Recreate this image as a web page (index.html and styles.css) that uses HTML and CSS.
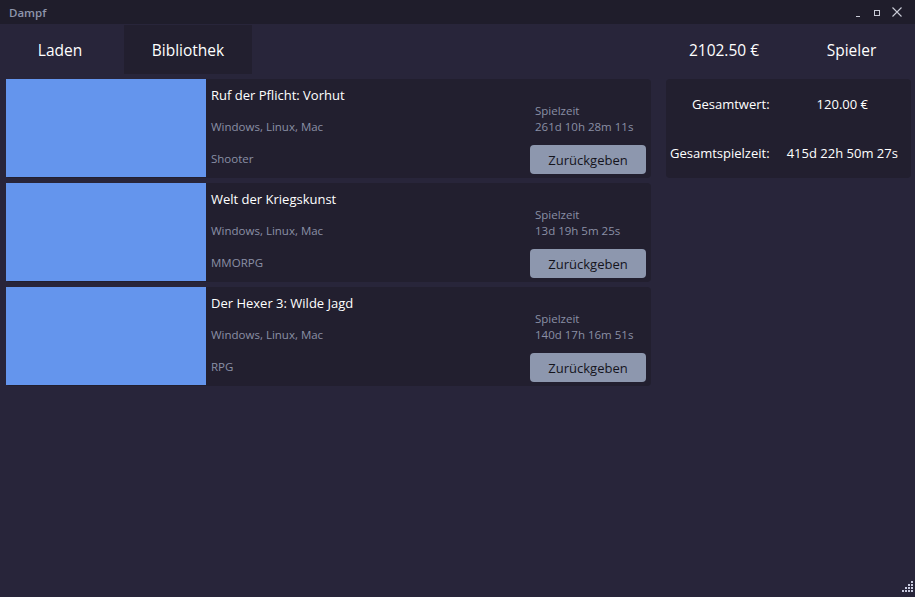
FILE: index.html
```html
<!DOCTYPE html>
<html lang="de">
<head>
<meta charset="utf-8">
<title>Dampf</title>
<link rel="stylesheet" href="styles.css">
</head>
<body>
<div class="window">
  <header class="titlebar">
    <span class="app-title">Dampf</span>
    <div class="controls">
      <svg class="ctl" width="10" height="10" viewBox="0 0 10 10"><path d="M3 9.5h4" stroke="#c9cbd6" stroke-width="1"/></svg>
      <svg class="ctl" width="10" height="10" viewBox="0 0 10 10"><rect x="2.5" y="3.5" width="5" height="5" fill="none" stroke="#c9cbd6" stroke-width="1"/></svg>
      <svg class="ctl ctl-x" width="12" height="12" viewBox="0 0 12 12"><path d="M1.5 1.5l9 9M10.5 1.5l-9 9" stroke="#c9cbd6" stroke-width="1.1"/></svg>
    </div>
  </header>
  <nav class="navbar">
    <div class="tab tab-laden">Laden</div>
    <div class="tab tab-active">Bibliothek</div>
    <div class="nav-spacer"></div>
    <div class="tab tab-balance">2102.50 €</div>
    <div class="tab tab-player">Spieler</div>
  </nav>
  <main class="content">
    <section class="library">
      <article class="card">
        <div class="cover"></div>
        <div class="info">
          <div class="game-title">Ruf der Pflicht: Vorhut</div>
          <div class="meta">Windows, Linux, Mac</div>
          <div class="meta">Shooter</div>
        </div>
        <div class="side">
          <div class="meta small">Spielzeit</div>
          <div class="meta small">261d 10h 28m 11s</div>
          <button class="return-btn">Zurückgeben</button>
        </div>
      </article>
      <article class="card">
        <div class="cover"></div>
        <div class="info">
          <div class="game-title">Welt der Kriegskunst</div>
          <div class="meta">Windows, Linux, Mac</div>
          <div class="meta">MMORPG</div>
        </div>
        <div class="side">
          <div class="meta small">Spielzeit</div>
          <div class="meta small">13d 19h 5m 25s</div>
          <button class="return-btn">Zurückgeben</button>
        </div>
      </article>
      <article class="card">
        <div class="cover"></div>
        <div class="info">
          <div class="game-title">Der Hexer 3: Wilde Jagd</div>
          <div class="meta">Windows, Linux, Mac</div>
          <div class="meta">RPG</div>
        </div>
        <div class="side">
          <div class="meta small">Spielzeit</div>
          <div class="meta small">140d 17h 16m 51s</div>
          <button class="return-btn">Zurückgeben</button>
        </div>
      </article>
    </section>
    <aside class="summary">
      <div class="sum-label">Gesamtwert:</div>
      <div class="sum-value">120.00 €</div>
      <div class="sum-label">Gesamtspielzeit:</div>
      <div class="sum-value">415d 22h 50m 27s</div>
    </aside>
  </main>
  <svg class="grip" width="14" height="14" viewBox="0 0 14 14">
    <g fill="#c9cbe0">
      <rect x="11" y="0" width="2" height="2"/>
      <rect x="8" y="3" width="2" height="2"/><rect x="11" y="3" width="2" height="2"/>
      <rect x="5" y="6" width="2" height="2"/><rect x="8" y="6" width="2" height="2"/><rect x="11" y="6" width="2" height="2"/>
      <rect x="2" y="9" width="2" height="2"/><rect x="5" y="9" width="2" height="2"/><rect x="8" y="9" width="2" height="2"/><rect x="11" y="9" width="2" height="2"/>
    </g>
  </svg>
</div>
</body>
</html>
```
FILE: styles.css
```css
html, body {
  margin: 0;
  padding: 0;
  height: 100%;
}
body {
  background: #28253a;
  font-family: "Open Sans", "Noto Sans", "Liberation Sans", sans-serif;
  color: #ffffff;
  overflow: hidden;
}
.window {
  position: relative;
  width: 915px;
  height: 597px;
  display: flex;
  flex-direction: column;
}
.titlebar {
  height: 24px;
  background: #1f1d2b;
  display: flex;
  align-items: center;
  justify-content: space-between;
  padding-left: 9px;
}
.app-title {
  font-size: 11.5px;
  color: #8e95ab;
  font-weight: 600;
}
.controls {
  display: flex;
  align-items: center;
  gap: 9px;
  padding-right: 12px;
}
.ctl { display: block; }
.navbar {
  height: 50px;
  display: flex;
  align-items: stretch;
}
.tab {
  display: flex;
  align-items: center;
  justify-content: center;
  font-size: 15.5px;
  color: #ffffff;
  margin-top: 1px;
}
.tab-laden { width: 120px; }
.tab-active { width: 128px; margin-left: 4px; background: #221f2f; }
.nav-spacer { flex: 1; }
.tab-balance { width: 128px; }
.tab-player { width: 127px; }
.content {
  display: flex;
  align-items: flex-start;
  padding: 5px 4px 0 6px;
  gap: 15px;
}
.library {
  width: 645px;
  display: flex;
  flex-direction: column;
  gap: 5px;
}
.card {
  height: 99px;
  background: #221f2f;
  border-radius: 4px;
  display: flex;
}
.cover {
  width: 200px;
  height: 98px;
  background: #6495ed;
}
.info {
  flex: 1;
  display: grid;
  grid-template-rows: 31px 32px 32px;
  padding-left: 5px;
}
.info > div {
  display: flex;
  align-items: center;
}
.game-title {
  font-size: 13px;
  color: #ffffff;
}
.meta {
  font-size: 11.5px;
  color: #8a8fa5;
}
.side {
  width: 116px;
  margin-right: 5px;
  display: flex;
  flex-direction: column;
  justify-content: flex-end;
  padding-bottom: 4px;
}
.side .small {
  line-height: 16px;
  padding-left: 5px;
}
.return-btn {
  margin-top: 10px;
  height: 29px;
  border: none;
  border-radius: 4px;
  background: #8d97ae;
  color: #14141c;
  font-family: inherit;
  font-size: 13px;
  padding: 0;
}
.summary {
  width: 245px;
  height: 99px;
  background: #221f2f;
  border-radius: 4px;
  display: grid;
  grid-template-columns: auto 1fr;
  grid-template-rows: 1fr 1fr;
  align-items: center;
  font-size: 13px;
}
.sum-label {
  text-align: right;
  padding-left: 4px;
}
.sum-value {
  text-align: center;
  padding-left: 4px;
}
.grip {
  position: absolute;
  right: 1px;
  bottom: 2px;
}
```
